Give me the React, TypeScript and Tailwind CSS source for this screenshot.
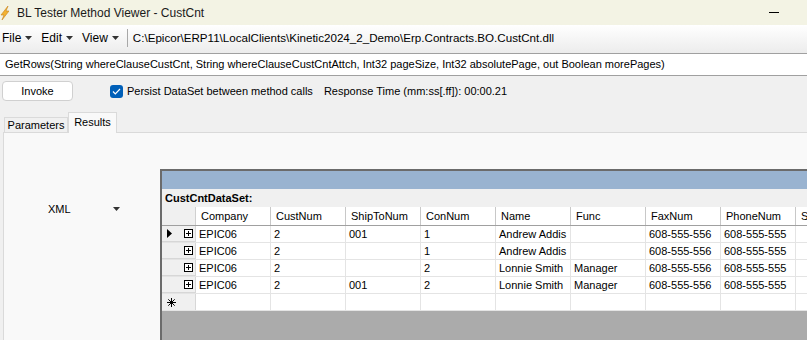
import React from "react";

// Grid rows shown in the results panel
interface ContactRow {
  company: string;
  custNum: string;
  shipTo: string;
  conNum: string;
  name: string;
  func: string;
  fax: string;
  phone: string;
}

const columns = ["Company", "CustNum", "ShipToNum", "ConNum", "Name", "Func", "FaxNum", "PhoneNum", "SpecialAddress"];

const rows: ContactRow[] = [
  { company: "EPIC06", custNum: "2", shipTo: "001", conNum: "1", name: "Andrew Addis", func: "", fax: "608-555-556", phone: "608-555-555" },
  { company: "EPIC06", custNum: "2", shipTo: "", conNum: "1", name: "Andrew Addis", func: "", fax: "608-555-556", phone: "608-555-555" },
  { company: "EPIC06", custNum: "2", shipTo: "", conNum: "2", name: "Lonnie Smith", func: "Manager", fax: "608-555-556", phone: "608-555-555" },
  { company: "EPIC06", custNum: "2", shipTo: "001", conNum: "2", name: "Lonnie Smith", func: "Manager", fax: "608-555-556", phone: "608-555-555" },
];

const DropArrow = () => (
  <svg width="7" height="4" viewBox="0 0 7 4" className="shrink-0">
    <path d="M0 0H7L3.5 4Z" fill="#333" />
  </svg>
);

const MenuItem = ({ label }: { label: string }) => (
  <div className="flex items-center gap-[4px] px-[2px]">
    <span>{label}</span>
    <DropArrow />
  </div>
);

const PlusBox = () => (
  <svg width="9" height="9" viewBox="0 0 9 9">
    <rect x="0.5" y="0.5" width="8" height="8" fill="white" stroke="#000" />
    <path d="M2 4.5H7M4.5 2V7" stroke="#000" />
  </svg>
);

const App: React.FC = () => {
  return (
    <div className="w-[807px] h-[340px] overflow-hidden bg-[#f0f0f0] flex flex-col font-['Liberation_Sans',Arial,sans-serif] text-[11px] text-black">
      {/* Title bar */}
      <div className="h-[25px] shrink-0 bg-[#f3f3e4] flex items-center relative">
        <svg width="9" height="14" viewBox="0 0 9 14">
          <path d="M8 0L1 9h3L2 14l7-9H6L8 0Z" fill="#f2b233" stroke="#c9831a" strokeWidth="0.6" />
        </svg>
        <span className="ml-[8px] text-[12px] text-[#1a1a1a]">BL Tester Method Viewer - CustCnt</span>
        <div className="ml-auto mr-[28px] w-[10px] h-px bg-black" />
      </div>

      {/* Menu bar */}
      <div className="h-[29px] shrink-0 bg-gradient-to-b from-white to-[#ececec] border-b border-[#a0a0a0] flex items-center text-[12px] pb-[2px]">
        <MenuItem label="File" />
        <div className="ml-[5px]">
          <MenuItem label="Edit" />
        </div>
        <div className="ml-[5px]">
          <MenuItem label="View" />
        </div>
        <div className="ml-[6px] w-px h-[18px] bg-[#a8a8a8]" />
        <span className="ml-[5px] text-[11.6px]">C:\Epicor\ERP11\LocalClients\Kinetic2024_2_Demo\Erp.Contracts.BO.CustCnt.dll</span>
      </div>

      {/* Method signature */}
      <div className="h-[22px] shrink-0 bg-white border-b border-[#a0a0a0] flex items-center px-[5px]">
        GetRows(String whereClauseCustCnt, String whereClauseCustCntAttch, Int32 pageSize, Int32 absolutePage, out Boolean morePages)
      </div>

      {/* Invoke row */}
      <div className="h-[30px] shrink-0 flex items-center">
        <button className="ml-[2px] w-[71px] h-[20px] bg-white border border-[#d0d0d0] rounded-[4px] text-[11px]">
          Invoke
        </button>
        <div className="ml-[37px] w-[13px] h-[13px] rounded-[3px] bg-[#005fb8] flex items-center justify-center">
          <svg width="9" height="7" viewBox="0 0 9 7">
            <path d="M1 3.5L3.3 5.8L8 1" fill="none" stroke="white" strokeWidth="1.2" />
          </svg>
        </div>
        <span className="ml-[4px]">Persist DataSet between method calls</span>
        <span className="ml-[11px]">Response Time (mm:ss[.ff]): 00:00.21</span>
      </div>

      {/* Tabs */}
      <div className="h-[26px] shrink-0 flex items-end pl-[4px]">
        <div className="h-[15px] w-[64px] border border-b-0 border-[#dadada] bg-[#f0f0f0] flex items-center justify-center">
          Parameters
        </div>
        <div className="h-[21px] w-[49px] border border-b-0 border-[#dadada] bg-[#f9f9f9] flex items-center justify-center -mb-px relative z-10 pb-[2px]">
          Results
        </div>
      </div>

      {/* Results panel */}
      <div className="flex-1 ml-[3px] bg-[#f9f9f9] border border-r-0 border-b-0 border-[#dadada] flex overflow-hidden">
        <div className="w-[156px] shrink-0 pt-[67px]">
          <div className="h-[18px] flex items-center">
            <span className="ml-[44px]">XML</span>
            <div className="ml-[42px]">
              <DropArrow />
            </div>
          </div>
        </div>

        {/* Data grid */}
        <div className="mt-[36px] w-[700px] shrink-0 border-l-2 border-t-2 border-[#6b6b6b] bg-[#ababab] flex flex-col">
          <div className="h-[18px] bg-[#99b3d0] flex items-center justify-end pr-[11px]">
            <svg width="11" height="9" viewBox="0 0 11 9">
              <path d="M0 4.5L5 0V3H11V6H5V9Z" fill="#000" />
            </svg>
          </div>
          <div className="h-[18px] bg-[#f0f0f0] flex items-center pl-[3px] font-bold">CustCntDataSet:</div>

          {/* Column headers */}
          <div className="h-[19px] flex bg-white border-b border-[#a0a0a0]">
            <div className="w-[34px] shrink-0 bg-[#f0f0f0] border-r border-[#d0d0d0]" />
            {columns.map((col) => (
              <div key={col} className="w-[75px] shrink-0 border-r border-[#c8c8c8] flex items-center pl-[5px] overflow-hidden whitespace-nowrap">
                {col}
              </div>
            ))}
          </div>

          {/* Data rows */}
          {rows.map((row, i) => (
            <div key={i} className="h-[17px] flex bg-white border-b border-[#e4e4e4]">
              <div className="w-[34px] shrink-0 bg-[#f0f0f0] border-r border-b border-[#d7d7d7] flex items-center relative">
                {i === 0 && (
                  <svg width="5" height="9" viewBox="0 0 5 9" className="absolute left-[5px]">
                    <path d="M0 0L5 4.5L0 9Z" fill="#000" />
                  </svg>
                )}
                <div className="ml-[22px]">
                  <PlusBox />
                </div>
              </div>
              {[row.company, row.custNum, row.shipTo, row.conNum, row.name, row.func, row.fax, row.phone, ""].map((v, j) => (
                <div key={j} className="w-[75px] shrink-0 border-r border-[#e4e4e4] flex items-center pl-[3px] whitespace-nowrap overflow-hidden">
                  {v}
                </div>
              ))}
            </div>
          ))}

          {/* New row */}
          <div className="h-[17px] flex bg-white border-b border-[#e4e4e4]">
            <div className="w-[34px] shrink-0 bg-[#f0f0f0] border-r border-[#d7d7d7] flex items-center pl-[5px]">
              <svg width="9" height="9" viewBox="0 0 9 9">
                <path d="M4.5 0V9M0 4.5H9M1.3 1.3L7.7 7.7M7.7 1.3L1.3 7.7" stroke="#000" strokeWidth="1" />
              </svg>
            </div>
            {columns.map((col) => (
              <div key={col} className="w-[75px] shrink-0 border-r border-[#e4e4e4]" />
            ))}
          </div>
        </div>
      </div>
    </div>
  );
};

export default App;
